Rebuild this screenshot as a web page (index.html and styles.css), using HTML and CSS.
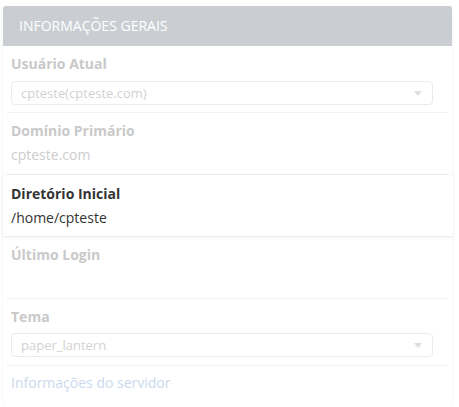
FILE: index.html
```html
<!DOCTYPE html>
<html lang="pt-BR">
<head>
<meta charset="utf-8">
<link rel="stylesheet" href="styles.css">
</head>
<body>
<div class="panel">
  <div class="panel-heading">INFORMAÇÕES GERAIS</div>
  <div class="panel-body">
    <div class="row faded">
      <div class="label">Usuário Atual</div>
      <div class="select first"><span>cpteste(cpteste.com)</span><span class="caret"></span></div>
    </div>
    <div class="row faded">
      <div class="label">Domínio Primário</div>
      <div class="value">cpteste.com</div>
    </div>
    <div class="row active">
      <div class="label">Diretório Inicial</div>
      <div class="value">/home/cpteste</div>
    </div>
    <div class="row faded">
      <div class="label">Último Login</div>
      <div class="value">&nbsp;</div>
    </div>
    <div class="row faded tall">
      <div class="label">Tema</div>
      <div class="select"><span>paper_lantern</span><span class="caret"></span></div>
    </div>
    <div class="row faded last">
      <a class="link">Informações do servidor</a>
    </div>
  </div>
</div>
</body>
</html>
```
FILE: styles.css
```css
* { box-sizing: border-box; }
html, body { margin: 0; background: #fff; }
body {
  font-family: "Open Sans", "Liberation Sans", sans-serif;
  font-size: 14px;
  color: #333;
  padding: 6px 7px 0 3px;
}
.panel {
  width: 449px;
  border-radius: 4px;
  box-shadow: 0 1px 3px rgba(0,0,0,0.06);
}
.panel-heading {
  height: 40px;
  background: #caced3;
  color: #fff;
  font-size: 14px;
  padding: 0 16px;
  line-height: 40px;
  border-radius: 3px 3px 0 0;
}
.panel-body {
  padding: 0 0 4px;
}
.row {
  margin: 0 4px;
  padding: 6px 4px 7px;
  border-bottom: 1px solid #f2f2f2;
}
.row.tall { padding-bottom: 8px; }
.row.last { border-bottom: none; padding-top: 6px; padding-bottom: 8px; }
.row.active {
  margin: 0 -1px 0 0;
  padding: 7px 9px 6px 8px;
  position: relative;
  background: #fff;
  box-shadow: 0 0 3px rgba(0,0,0,0.08);
  border-bottom: 1px solid #eee;
}
.label {
  font-weight: 700;
  font-size: 14px;
  line-height: 24px;
}
.faded .label { color: #c9c9c9; }
.value { line-height: 24px; margin-top: 0; }
.faded .value { color: #cdcdcd; }
.select {
  margin-top: 4px;
  height: 24px;
  width: 422px;
  border: 1px solid #ebebeb;
  border-radius: 4px;
  padding: 0 10px 0 9px;
  display: flex;
  align-items: center;
  justify-content: space-between;
  font-size: 13px;
  color: #d2d2d2;
}
.select.first { margin-top: 5px; }
.caret {
  width: 0; height: 0;
  border-left: 4px solid transparent;
  border-right: 4px solid transparent;
  border-top: 5px solid #dedede;
}
.link { color: #cad9ee; font-size: 14px; line-height: 22px; }
```
